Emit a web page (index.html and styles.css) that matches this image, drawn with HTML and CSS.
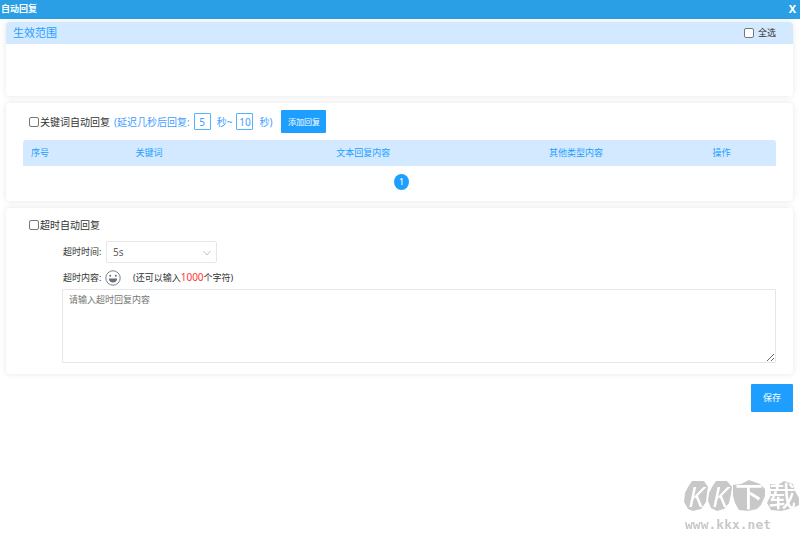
FILE: index.html
```html
<!DOCTYPE html>
<html lang="zh-CN">
<head>
  <meta charset="UTF-8">
  <meta name="viewport" content="width=device-width, initial-scale=1.0">
  <title>自动回复</title>
  <link rel="stylesheet" href="styles.css">
</head>
<body>
  <header class="titlebar">
    <h1>自动回复</h1>
    <button type="button" class="close" aria-label="关闭">X</button>
  </header>

  <main>
    <section class="card scope">
      <div class="card-head">
        <h2>生效范围</h2>
        <label class="check-all"><input type="checkbox"> 全选</label>
      </div>
    </section>

    <section class="card keyword">
      <div class="row">
        <label class="check"><input type="checkbox">关键词自动回复</label>
        <div class="delay">
          <label for="delay-min">(延迟几秒后回复:</label>
          <input type="text" id="delay-min" value="5">
          <label for="delay-max">秒~</label>
          <input type="text" id="delay-max" value="10">
          <span>秒)</span>
        </div>
        <button type="button" class="btn add">添加回复</button>
      </div>
      <table class="replies">
        <thead>
          <tr>
            <th class="col-no">序号</th>
            <th class="col-key">关键词</th>
            <th class="col-text">文本回复内容</th>
            <th class="col-other">其他类型内容</th>
            <th class="col-action">操作</th>
          </tr>
        </thead>
      </table>
      <nav class="pager"><a href="#">1</a></nav>
    </section>

    <section class="card timeout">
      <label class="check"><input type="checkbox">超时自动回复</label>
      <div class="timeout-form">
        <div class="field">
          <label for="timeout">超时时间:</label>
          <div class="select-wrap">
            <select id="timeout">
              <option>5s</option>
              <option>10s</option>
              <option>30s</option>
            </select>
            <svg class="arrow" viewBox="0 0 8 6" width="8" height="6"><path d="M.5 1 4 5 7.5 1"/></svg>
          </div>
        </div>
        <div class="field content-field">
          <label for="content">超时内容:</label>
          <button type="button" class="emoji" aria-label="表情">
            <svg viewBox="0 0 16 16" width="16" height="16">
              <circle cx="8" cy="8" r="7.2" fill="none" stroke="#7c8288"/>
              <circle cx="5.2" cy="5.8" r="1" fill="#6b7076"/>
              <circle cx="10.8" cy="5.8" r="1" fill="#6b7076"/>
              <path d="M3.8 8.4H12.2Q11.8 12.4 8 12.4Q4.2 12.4 3.8 8.4Z" fill="#6b7076"/>
            </svg>
          </button>
          <span class="count">(还可以输入<em>1000</em>个字符)</span>
        </div>
        <textarea id="content" placeholder="请输入超时回复内容"></textarea>
      </div>
    </section>

    <div class="actions">
      <button type="button" class="btn save">保存</button>
    </div>
  </main>

  <aside class="watermark">
    <div class="mark">
      <svg class="stones" viewBox="0 0 116 36" width="116" height="36">
        <path d="M4 7 8 1 20 1 24 7 23 13 22 22 17 29 9 31 4 29 0 22 1 13Z"/>
        <path d="M28 7 32 1 43 1 48 7 47 14 45 23 40 29 33 31 27 28 24 21 25 13Z"/>
        <path d="M49 5 57 4 65 0 76 4 81 9 81 16 77 25 73 29 64 31 55 30 51 23 49 16Z"/>
        <path d="M86 4 94 5 100 1 109 4 111 11 115 18 115 25 109 28 97 31 87 30 83 23 87 15Z"/>
      </svg>
      <span class="mark-text"><i>K</i><i>K</i><b>下</b><b>载</b></span>
    </div>
    <p>www.kkx.net</p>
  </aside>
</body>
</html>
```
FILE: styles.css
```css
* {
  box-sizing: border-box;
}

body {
  margin: 0;
  background: #fff;
  color: #333;
  font-family: "Noto Sans", "Noto Sans CJK SC", sans-serif;
  font-size: 9px;
  line-height: 16px;
}

h1, h2, p {
  margin: 0;
}

button, input, select, textarea {
  margin: 0;
  font: inherit;
}

.titlebar {
  display: flex;
  justify-content: space-between;
  align-items: center;
  height: 19px;
  padding: 0 4px 2px 1px;
  background: #2a9fe5;
  color: #fff;
}

.titlebar h1 {
  font-size: 9px;
}

.close {
  padding: 0;
  border: none;
  background: none;
  color: #fff;
  font-size: 11px;
  font-weight: bold;
}

main {
  padding: 3px 7px 0 6px;
}

.card {
  margin-bottom: 7px;
  border-radius: 4px;
  background: #fff;
  box-shadow: 0 0 6px rgba(0, 0, 0, 0.1);
}

.scope {
  min-height: 74px;
}

.card-head {
  display: flex;
  justify-content: space-between;
  align-items: center;
  height: 22px;
  padding: 0 17px 0 7px;
  border-radius: 4px 4px 0 0;
  background: #d3e9ff;
}

.card-head h2 {
  color: #1e9fff;
  font-size: 11px;
  font-weight: normal;
}

input[type="checkbox"] {
  width: 10px;
  height: 10px;
  appearance: none;
  border: 1px solid #767676;
  border-radius: 2px;
  background: #fff;
}

input[type="checkbox"]:checked {
  background: #1e9fff;
}

.check-all {
  display: flex;
  align-items: center;
  gap: 4px;
}

.check {
  display: flex;
  align-items: center;
  gap: 1px;
  font-size: 10px;
}

.keyword {
  padding: 7px 17px 11px;
}

.row {
  display: flex;
  align-items: center;
  padding-left: 6px;
}

.delay {
  display: flex;
  align-items: center;
  gap: 4px;
  margin: 0 9px 0 4px;
  color: #409eff;
  font-size: 10px;
}

.delay input {
  width: 17px;
  height: 17px;
  margin-right: 2px;
  padding: 0;
  border: 1px solid #50b4ff;
  border-radius: 1px;
  background: #fff;
  color: #409eff;
  text-align: center;
}

.btn {
  padding: 0;
  border: none;
  border-radius: 1px;
  background: #1e9fff;
  color: #fff;
}

.add {
  width: 45px;
  height: 23px;
  font-size: 8px;
}

.replies {
  width: 100%;
  margin-top: 7px;
  border-radius: 3px 3px 0 0;
  border-collapse: collapse;
  background: #d3e9ff;
  color: #1e9fff;
  table-layout: fixed;
}

.replies th {
  height: 26px;
  padding: 0;
  font-weight: normal;
}

.col-no { width: 4.5%; }
.col-key { width: 24.5%; }
.col-text { width: 32.4%; }
.col-other { width: 24.1%; }
.col-action { width: 14.5%; }

.pager {
  display: flex;
  justify-content: center;
  padding: 8px 0 0 4px;
}

.pager a {
  width: 15px;
  border-radius: 50%;
  background: #1e9fff;
  color: #fff;
  text-align: center;
  text-decoration: none;
}

.timeout {
  padding: 9px 17px 11px 23px;
}

.timeout-form {
  padding: 8px 0 0 33px;
}

.field {
  display: flex;
  align-items: center;
  padding-left: 1px;
}

.field label {
  width: 43px;
  white-space: nowrap;
}

.select-wrap {
  position: relative;
  width: 111px;
}

.select-wrap select {
  display: block;
  width: 100%;
  height: 22px;
  padding: 0 20px 0 6px;
  appearance: none;
  border: 1px solid #e6e6e6;
  border-radius: 2px;
  background: #fff;
  color: #606266;
  font-size: 10px;
}

.arrow {
  position: absolute;
  top: 9px;
  right: 6px;
  fill: none;
  stroke: #c0c4cc;
  pointer-events: none;
}

.content-field {
  margin-top: 6px;
}

.content-field label {
  width: 42px;
}

.emoji {
  width: 16px;
  height: 16px;
  padding: 0;
  border: none;
  background: none;
}

.emoji svg {
  display: block;
}

.count {
  margin-left: 12px;
}

.count em {
  color: #f33;
  font-size: 10px;
  font-style: normal;
}

textarea {
  display: block;
  width: 100%;
  height: 74px;
  margin-top: 3px;
  padding: 2px 6px;
  border: 1px solid #e6e6e6;
  border-radius: 1px;
  background: #fff;
  resize: vertical;
}

textarea::placeholder {
  color: #757575;
}

.actions {
  display: flex;
  justify-content: flex-end;
  padding-top: 3px;
}

.save {
  width: 42px;
  height: 28px;
}

/* site mark in the window corner */
.watermark {
  position: fixed;
  right: 0;
  bottom: 0;
  width: 116px;
  color: #c8c8c8;
}

.mark {
  position: relative;
  height: 37px;
}

.stones {
  display: block;
  fill: #c8c8c8;
}

.mark-text {
  position: absolute;
  inset: 0;
  display: grid;
  grid-template-columns: 24px 24px 34px 32px;
  color: #fff;
  font-size: 28px;
  line-height: 32px;
  text-align: center;
}

.mark-text i {
  font-weight: normal;
}

.mark-text b {
  font-weight: 500;
}

.watermark p {
  padding-left: 1px;
  font-family: "DejaVu Sans Mono", monospace;
  font-size: 13px;
  font-weight: bold;
}
```
